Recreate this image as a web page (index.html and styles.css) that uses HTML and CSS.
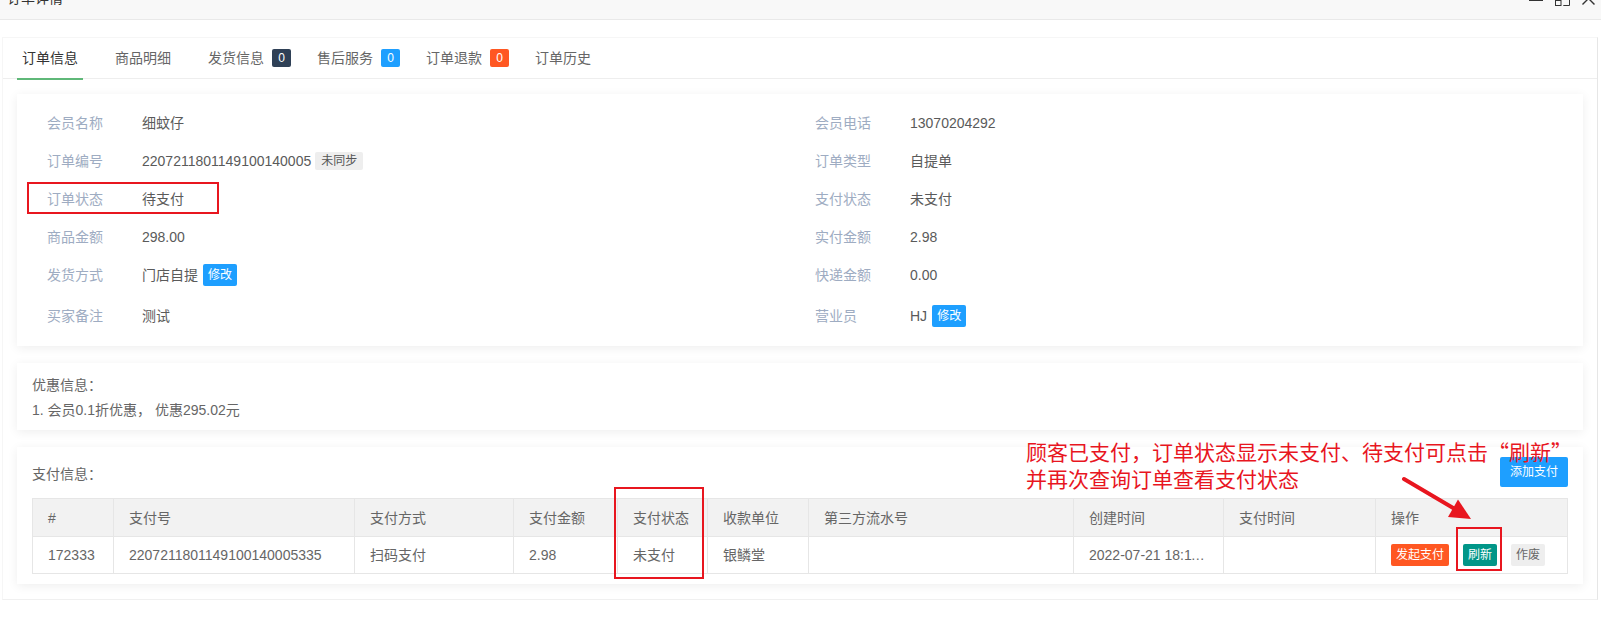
FILE: index.html
```html
<!DOCTYPE html>
<html lang="zh-CN">
<head>
<meta charset="utf-8">
<title>订单详情</title>
<link rel="stylesheet" href="styles.css">
</head>
<body>
<div class="page">
  <header class="win-title">
    <span class="win-title-text">订单详情</span>
    <svg class="win-ctrls" width="66" height="19" viewBox="0 0 66 19">
      <rect x="0" y="-1" width="14" height="2" fill="#333"/>
      <rect x="26.5" y="0.5" width="5.5" height="5" fill="none" stroke="#333"/>
      <path d="M34.3 5.5H40.5V-6" fill="none" stroke="#333"/>
      <path d="M53.5 -7.5L65.5 4.5M65.5 -7.5L53.5 4.5" fill="none" stroke="#333" stroke-width="1.4"/>
    </svg>
  </header>

  <main class="panel">
    <nav class="tabs">
      <span class="tab active">订单信息</span>
      <span class="tab">商品明细</span>
      <span class="tab has-badge">发货信息<i class="badge badge-dark">0</i></span>
      <span class="tab has-badge">售后服务<i class="badge badge-blue">0</i></span>
      <span class="tab has-badge">订单退款<i class="badge badge-orange">0</i></span>
      <span class="tab">订单历史</span>
    </nav>

    <div class="tab-body">
      <section class="card info-card">
        <div class="info-row"><span class="lbl">会员名称</span><span class="val">细蚊仔</span></div>
        <div class="info-row"><span class="lbl">会员电话</span><span class="val">13070204292</span></div>
        <div class="info-row"><span class="lbl">订单编号</span><span class="val">2207211801149100140005</span><span class="tag">未同步</span></div>
        <div class="info-row"><span class="lbl">订单类型</span><span class="val">自提单</span></div>
        <div class="info-row"><span class="lbl">订单状态</span><span class="val">待支付</span></div>
        <div class="info-row"><span class="lbl">支付状态</span><span class="val">未支付</span></div>
        <div class="info-row"><span class="lbl">商品金额</span><span class="val">298.00</span></div>
        <div class="info-row"><span class="lbl">实付金额</span><span class="val">2.98</span></div>
        <div class="info-row"><span class="lbl">发货方式</span><span class="val">门店自提</span><span class="btn-mini">修改</span></div>
        <div class="info-row"><span class="lbl">快递金额</span><span class="val">0.00</span></div>
        <div class="info-row"><span class="lbl">买家备注</span><span class="val">测试</span></div>
        <div class="info-row"><span class="lbl">营业员</span><span class="val">HJ</span><span class="btn-mini">修改</span></div>
      </section>

      <section class="card promo-card">
        <p class="line">优惠信息：</p>
        <p class="line">1. 会员0.1折优惠， 优惠295.02元</p>
      </section>

      <section class="card pay-card">
        <div class="pay-head">
          <span class="pay-title">支付信息：</span>
          <span class="btn-sm">添加支付</span>
        </div>
        <table class="pay-table">
          <colgroup>
            <col class="c1"><col class="c2"><col class="c3"><col class="c4"><col class="c5">
            <col class="c6"><col class="c7"><col class="c8"><col class="c9"><col class="c10">
          </colgroup>
          <thead>
            <tr>
              <th>#</th><th>支付号</th><th>支付方式</th><th>支付金额</th><th>支付状态</th>
              <th>收款单位</th><th>第三方流水号</th><th>创建时间</th><th>支付时间</th><th>操作</th>
            </tr>
          </thead>
          <tbody>
            <tr>
              <td>172333</td>
              <td>2207211801149100140005335</td>
              <td>扫码支付</td>
              <td>2.98</td>
              <td>未支付</td>
              <td>银鳞堂</td>
              <td></td>
              <td><div class="ellipsis">2022-07-21 18:11:49</div></td>
              <td></td>
              <td>
                <div class="ops">
                  <span class="btn-xs btn-orange">发起支付</span>
                  <span class="btn-xs btn-teal">刷新</span>
                  <span class="btn-xs btn-gray">作废</span>
                </div>
              </td>
            </tr>
          </tbody>
        </table>
      </section>
    </div>
  </main>

  <svg class="marks" width="1601" height="637" viewBox="0 0 1601 637">
    <rect x="28" y="183" width="190" height="30" fill="none" stroke="#e8161f" stroke-width="2"/>
    <rect x="615" y="488" width="88" height="90" fill="none" stroke="#e8161f" stroke-width="2"/>
    <rect x="1457" y="528" width="44" height="42" fill="none" stroke="#e8161f" stroke-width="2"/>
    <line x1="1404" y1="479" x2="1454" y2="508.5" stroke="#e8161f" stroke-width="4" stroke-linecap="round"/>
    <polygon points="1471,519 1448,517 1458,499.5" fill="#e8161f"/>
  </svg>
  <div class="note">
    <div>顾客已支付，订单状态显示未支付、待支付可点击“刷新”</div>
    <div>并再次查询订单查看支付状态</div>
  </div>
</div>
</body>
</html>
```

FILE: styles.css
```css
* { box-sizing: border-box; }

html, body {
  margin: 0;
  padding: 0;
  background: #fff;
}

body {
  font-family: "Liberation Sans", "Noto Sans CJK SC", sans-serif;
  font-size: 14px;
  color: #666;
}

.page {
  position: relative;
  width: 1601px;
  min-height: 637px;
}

/* window title bar */
.win-title {
  height: 20px;
  background: #f8f8f8;
  border-bottom: 1px solid #e9e9e9;
  display: flex;
  justify-content: space-between;
  align-items: flex-start;
  overflow: hidden;
}

.win-title-text {
  margin: -9px 0 0 7px;
  font-size: 14px;
  line-height: 14px;
  color: #333;
}

.win-ctrls {
  margin-right: 6px;
  display: block;
}

/* main panel */
.panel {
  margin: 17px 3px 0 2px;
  border: 1px solid #f6f6f6;
  border-right-color: #e6e6e6;
  border-bottom-color: #f0f0f0;
  background: #fff;
}

.tabs {
  display: flex;
  gap: 27px;
  padding-left: 14px;
  height: 41px;
  border-bottom: 1px solid #eeeeee;
}

.tab {
  position: relative;
  display: flex;
  align-items: center;
  padding: 0 5px;
  height: 40px;
  line-height: 40px;
  color: #666;
  white-space: nowrap;
}

.tab.has-badge {
  padding-right: 0;
  margin-right: -6px;
}

.tab.active { color: #333; }

.tab.active::after {
  content: "";
  position: absolute;
  left: 0;
  right: 0;
  bottom: -2px;
  height: 2px;
  background: #5fb878;
}

.badge {
  display: inline-block;
  margin-left: 8px;
  height: 18px;
  min-width: 19px;
  padding: 0 6px;
  line-height: 18px;
  font-size: 12px;
  font-style: normal;
  color: #fff;
  text-align: center;
  border-radius: 2px;
}

.badge-dark { background: #2f4056; }
.badge-blue { background: #1e9fff; }
.badge-orange { background: #ff5722; }

.tab-body {
  padding: 15px 14px;
  display: flex;
  flex-direction: column;
  gap: 17px;
}

.card {
  background: #fff;
  box-shadow: 0 2px 10px rgba(0, 0, 0, 0.07);
}

/* info card */
.info-card {
  display: grid;
  grid-template-columns: 1fr 1fr;
  grid-template-rows: repeat(5, 38px) 44px;
  padding: 10px 15px 8px;
}

.info-row {
  display: flex;
  align-items: center;
  padding: 0 15px;
  line-height: 20px;
}

.lbl {
  width: 95px;
  flex: none;
  color: #9eacc2;
}

.val { color: #5a5a5a; }

.tag {
  margin-left: 4px;
  height: 18px;
  line-height: 18px;
  padding: 0 6px;
  font-size: 12px;
  color: #555;
  background: #eeeeee;
  border-radius: 2px;
}

.btn-mini {
  margin-left: 5px;
  height: 22px;
  line-height: 22px;
  padding: 0 5px;
  font-size: 12px;
  color: #fff;
  background: #1e9fff;
  border-radius: 2px;
}

/* promo card */
.promo-card {
  padding: 10px 15px 7px;
}

.promo-card .line {
  margin: 0;
  line-height: 25px;
  color: #666;
}

/* pay card */
.pay-card {
  padding: 10px 15px;
}

.pay-head {
  display: flex;
  justify-content: space-between;
  align-items: center;
  height: 30px;
}

.pay-title {
  color: #666;
  line-height: 20px;
  margin-top: 4px;
}

.btn-sm {
  height: 30px;
  line-height: 30px;
  padding: 0 10px;
  font-size: 12px;
  color: #fff;
  background: #1e9fff;
  border-radius: 2px;
}

.pay-table {
  margin-top: 11px;
  width: 100%;
  table-layout: fixed;
  border-collapse: collapse;
  color: #666;
}

.c1 { width: 81px; }
.c2 { width: 241px; }
.c3 { width: 159px; }
.c4 { width: 104px; }
.c5 { width: 90px; }
.c6 { width: 101px; }
.c7 { width: 265px; }
.c8 { width: 150px; }
.c9 { width: 152px; }
.c10 { width: 192px; }

.pay-table th,
.pay-table td {
  border: 1px solid #e6e6e6;
  padding: 0 15px;
  text-align: left;
  font-weight: normal;
  line-height: 20px;
  white-space: nowrap;
  overflow: hidden;
}

.pay-table th {
  height: 38px;
  background: #f2f2f2;
}

.pay-table td {
  height: 37px;
}

.ellipsis {
  overflow: hidden;
  text-overflow: ellipsis;
  white-space: nowrap;
}

.ops {
  display: flex;
  gap: 14px;
  align-items: center;
}

.btn-xs {
  height: 22px;
  line-height: 22px;
  padding: 0 5px;
  font-size: 12px;
  border-radius: 2px;
  color: #fff;
}

.btn-orange { background: #ff5722; }
.btn-teal { background: #009688; }
.btn-gray { background: #eeeeee; color: #666; }

/* annotation overlay */
.marks {
  position: absolute;
  left: 0;
  top: 0;
  pointer-events: none;
}

.note {
  position: absolute;
  left: 1026px;
  top: 438px;
  font-family: "Noto Sans CJK SC", sans-serif;
  font-size: 21px;
  line-height: 27px;
  color: #e8161f;
  white-space: nowrap;
}
```
